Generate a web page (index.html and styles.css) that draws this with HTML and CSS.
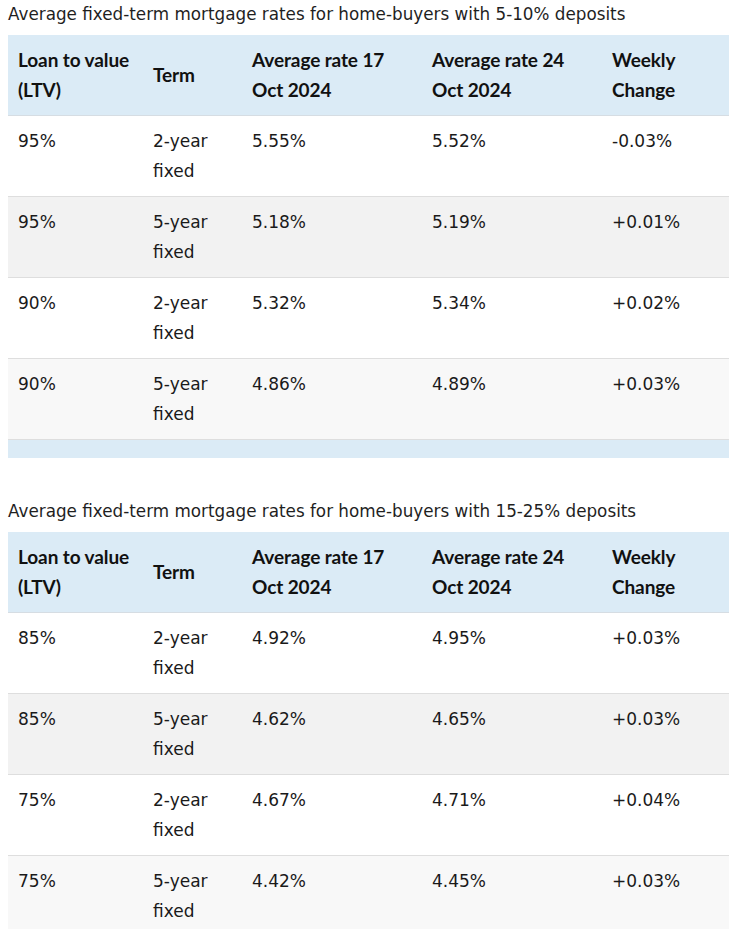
FILE: index.html
```html
<!DOCTYPE html>
<html>
<head>
<meta charset="utf-8">
<link rel="stylesheet" href="styles.css">
</head>
<body>
<section class="block">
  <p class="caption">Average fixed-term mortgage rates for home-buyers with 5-10% deposits</p>
  <table class="rates">
    <colgroup><col class="c1"><col class="c2"><col class="c3"><col class="c4"><col class="c5"></colgroup>
    <thead>
      <tr><th>Loan to value (LTV)</th><th>Term</th><th>Average rate 17 Oct 2024</th><th>Average rate 24 Oct 2024</th><th>Weekly Change</th></tr>
    </thead>
    <tbody>
      <tr><td>95%</td><td>2-year fixed</td><td>5.55%</td><td>5.52%</td><td>-0.03%</td></tr>
      <tr class="alt"><td>95%</td><td>5-year fixed</td><td>5.18%</td><td>5.19%</td><td>+0.01%</td></tr>
      <tr><td>90%</td><td>2-year fixed</td><td>5.32%</td><td>5.34%</td><td>+0.02%</td></tr>
      <tr class="alt2"><td>90%</td><td>5-year fixed</td><td>4.86%</td><td>4.89%</td><td>+0.03%</td></tr>
    </tbody>
    <tfoot><tr><td colspan="5"></td></tr></tfoot>
  </table>
</section>
<section class="block second">
  <p class="caption">Average fixed-term mortgage rates for home-buyers with 15-25% deposits</p>
  <table class="rates">
    <colgroup><col class="c1"><col class="c2"><col class="c3"><col class="c4"><col class="c5"></colgroup>
    <thead>
      <tr><th>Loan to value (LTV)</th><th>Term</th><th>Average rate 17 Oct 2024</th><th>Average rate 24 Oct 2024</th><th>Weekly Change</th></tr>
    </thead>
    <tbody>
      <tr><td>85%</td><td>2-year fixed</td><td>4.92%</td><td>4.95%</td><td>+0.03%</td></tr>
      <tr class="alt"><td>85%</td><td>5-year fixed</td><td>4.62%</td><td>4.65%</td><td>+0.03%</td></tr>
      <tr><td>75%</td><td>2-year fixed</td><td>4.67%</td><td>4.71%</td><td>+0.04%</td></tr>
      <tr class="alt2"><td>75%</td><td>5-year fixed</td><td>4.42%</td><td>4.45%</td><td>+0.03%</td></tr>
    </tbody>
  </table>
</section>
</body>
</html>
```
FILE: styles.css
```css
body {
  margin: 0;
  padding: 0 9px 0 8px;
  background: #fff;
  color: #1a1a1a;
  font-family: "DejaVu Sans", Verdana, sans-serif;
}
.block { margin: 0; }
.second { margin-top: 39px; }
.caption {
  margin: 0;
  height: 35px;
  line-height: 29px;
  font-size: 16.8px;
  color: #1f1f1f;
}
.rates {
  width: 100%;
  border-collapse: collapse;
  table-layout: fixed;
}
.c1 { width: 135px; }
.c2 { width: 99px; }
.c3 { width: 180px; }
.c4 { width: 180px; }
.c5 { width: auto; }
.rates th {
  background: #dbebf6;
  text-align: left;
  vertical-align: middle;
  padding: 10px;
  font-family: Lato, "Open Sans", sans-serif;
  font-weight: 700;
  font-size: 19px;
  letter-spacing: -0.1px;
  line-height: 30px;
  color: #111;
  border-bottom: 1px solid #d6dde3;
  height: 60px;
}
.rates td {
  vertical-align: top;
  padding: 10px;
  font-size: 17px;
  line-height: 30px;
  height: 60px;
  border-bottom: 1px solid #dedede;
  color: #1a1a1a;
}
.rates tr.alt td { background: #f2f2f2; }
.rates tr.alt2 td { background: #f8f8f8; }
.rates tfoot td {
  background: #dbebf6;
  height: 18px;
  padding: 0;
  border: 0;
}
```
